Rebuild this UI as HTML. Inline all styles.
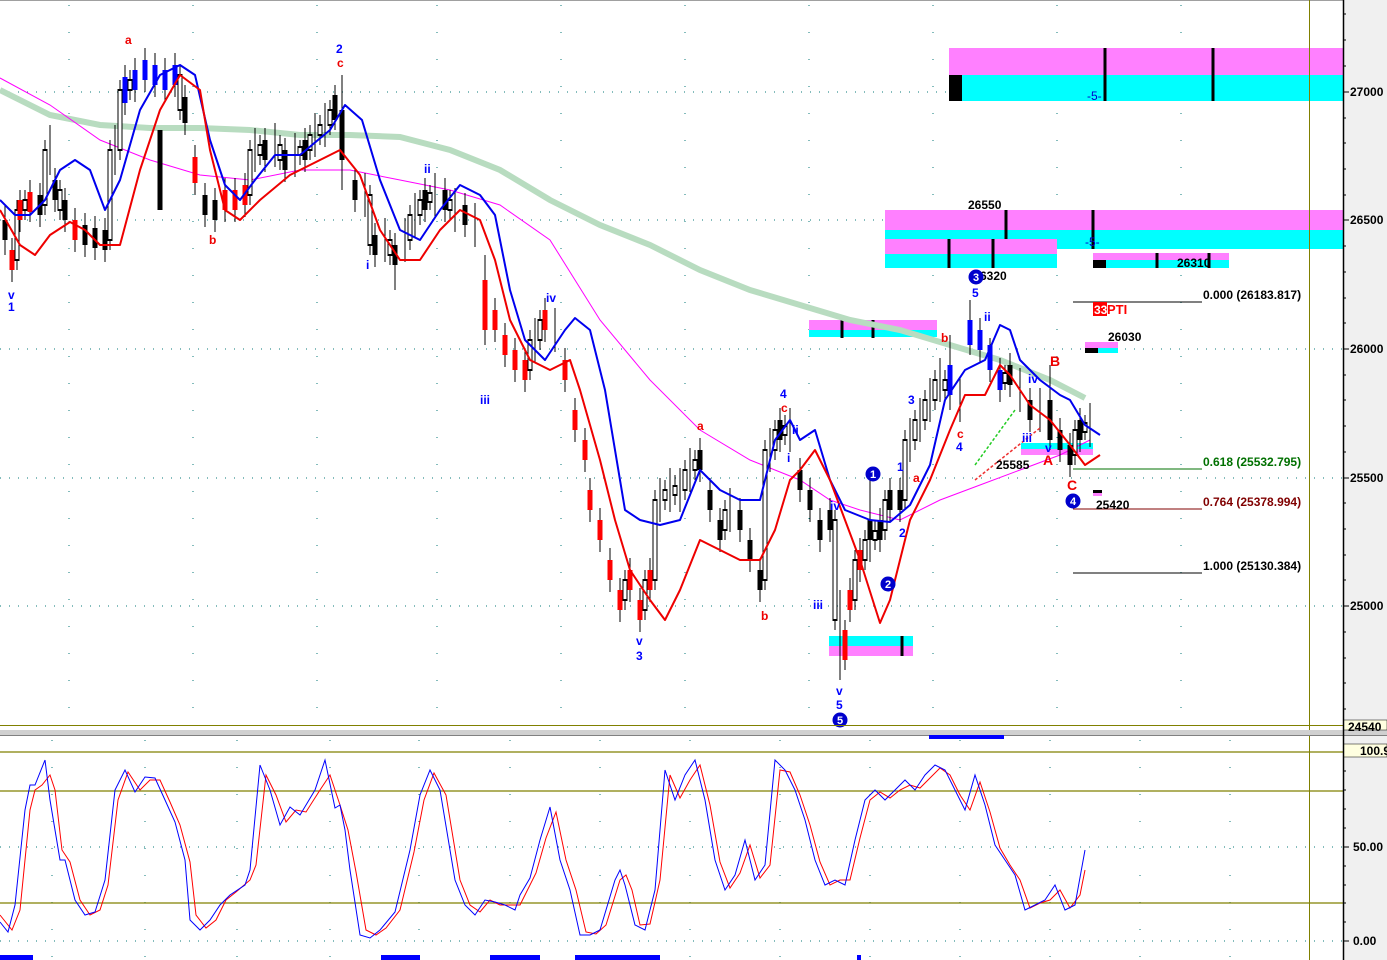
<!DOCTYPE html>
<html><head><meta charset="utf-8"><style>
html,body{margin:0;padding:0;background:#fff;}
svg{display:block;font-family:"Liberation Sans",sans-serif;font-weight:bold;}
</style></head><body>
<svg width="1387" height="960" viewBox="0 0 1387 960" xmlns="http://www.w3.org/2000/svg">
<rect width="1387" height="960" fill="#fff"/>
<rect x="1343" y="0" width="44" height="960" fill="#f0f0f0"/>
<line x1="0" y1="0.5" x2="1343" y2="0.5" stroke="#a0a0a0"/>
<g stroke="#0a7a7a" stroke-width="1" stroke-dasharray="1,8">
<line x1="0" y1="92" x2="1343" y2="92"/><line x1="0" y1="220" x2="1343" y2="220"/>
<line x1="0" y1="349" x2="1343" y2="349"/><line x1="0" y1="478" x2="1343" y2="478"/>
<line x1="0" y1="606" x2="1343" y2="606"/>
<line x1="0" y1="752" x2="1343" y2="752"/><line x1="0" y1="847" x2="1343" y2="847"/><line x1="0" y1="941" x2="1343" y2="941"/>
</g>
<g stroke="#0a7a7a" stroke-width="1" stroke-dasharray="1,26">
<line x1="69" y1="5" x2="69" y2="725"/><line x1="193" y1="5" x2="193" y2="725"/><line x1="317" y1="5" x2="317" y2="725"/><line x1="437" y1="5" x2="437" y2="725"/><line x1="561" y1="5" x2="561" y2="725"/><line x1="685" y1="5" x2="685" y2="725"/><line x1="809" y1="5" x2="809" y2="725"/><line x1="933" y1="5" x2="933" y2="725"/><line x1="1057" y1="5" x2="1057" y2="725"/><line x1="1181" y1="5" x2="1181" y2="725"/>
<line x1="52" y1="740" x2="52" y2="960"/><line x1="145" y1="740" x2="145" y2="960"/><line x1="237" y1="740" x2="237" y2="960"/><line x1="330" y1="740" x2="330" y2="960"/><line x1="419" y1="740" x2="419" y2="960"/><line x1="510" y1="740" x2="510" y2="960"/><line x1="600" y1="740" x2="600" y2="960"/><line x1="690" y1="740" x2="690" y2="960"/><line x1="780" y1="740" x2="780" y2="960"/><line x1="870" y1="740" x2="870" y2="960"/><line x1="960" y1="740" x2="960" y2="960"/><line x1="1050" y1="740" x2="1050" y2="960"/><line x1="1140" y1="740" x2="1140" y2="960"/><line x1="1230" y1="740" x2="1230" y2="960"/>
</g>
<rect x="949" y="48" width="394" height="27" fill="#ff80ff"/><rect x="949" y="75" width="394" height="26" fill="#00ffff"/>
<rect x="949" y="75" width="13" height="26" fill="#000"/>
<rect x="885" y="210" width="458" height="20" fill="#ff80ff"/><rect x="885" y="230" width="458" height="19" fill="#00ffff"/>
<rect x="885" y="239" width="172" height="15" fill="#ff80ff"/><rect x="885" y="254" width="172" height="14" fill="#00ffff"/>
<rect x="1093" y="253" width="136" height="7" fill="#ff80ff"/><rect x="1093" y="260" width="136" height="8" fill="#00ffff"/><rect x="1093" y="260" width="13" height="8" fill="#000"/>
<rect x="809" y="320" width="128" height="10" fill="#ff80ff"/><rect x="809" y="330" width="128" height="7" fill="#00ffff"/>
<rect x="1085" y="342" width="33" height="6" fill="#ff80ff"/><rect x="1085" y="348" width="33" height="5" fill="#00ffff"/><rect x="1085" y="348" width="13" height="5" fill="#000"/>
<rect x="1021" y="443" width="72" height="6" fill="#00ffff"/><rect x="1021" y="449" width="72" height="6" fill="#ff80ff"/>
<rect x="829" y="636" width="84" height="10" fill="#00ffff"/><rect x="829" y="646" width="84" height="10" fill="#ff80ff"/>
<rect x="1093" y="490" width="9" height="3" fill="#000"/><rect x="1093" y="493" width="9" height="3" fill="#ff80ff"/>
<g stroke="#000" stroke-width="3">
<line x1="1105" y1="48" x2="1105" y2="101"/><line x1="1213" y1="48" x2="1213" y2="101"/>
<line x1="1006" y1="210" x2="1006" y2="239"/><line x1="1093" y1="210" x2="1093" y2="249"/>
<line x1="949" y1="239" x2="949" y2="268"/><line x1="993" y1="239" x2="993" y2="268"/><line x1="1157" y1="253" x2="1157" y2="268"/><line x1="1209" y1="253" x2="1209" y2="268"/>
<line x1="842" y1="320" x2="842" y2="338"/><line x1="873" y1="320" x2="873" y2="338"/><line x1="902" y1="636" x2="902" y2="656"/>
</g>
<polyline fill="none" stroke="#b8dcc0" stroke-width="6" points="0,90 50,115 100,125 150,128 200,128 250,130 300,135 350,135 400,137 450,150 500,170 550,200 600,225 650,245 700,270 750,290 800,305 850,320 900,330 950,345 1000,360 1050,380 1085,398"/>
<polyline fill="none" stroke="#ff00ff" stroke-width="1" points="0,78 50,105 100,140 150,160 200,175 250,180 300,170 350,170 400,180 450,190 500,205 550,240 600,320 650,380 700,430 750,460 800,480 830,500 860,510 900,520 940,500 980,485 1020,470 1060,455 1090,440"/>
<g stroke="#000" stroke-width="1">
<path d="M5 205V255M12 238V282M20 190V232M30 180V222M40 183V227M50 125V175M55 168V212M65 188V232M75 208V252M85 213V257M95 216V260M105 218V262M115 125V175M125 65V115M135 58V102M145 48V92M155 53V97M165 58V102M175 53V97M185 85V135M195 145V195M205 183V227M215 188V232M225 178V222M235 178V222M245 173V217M255 128V172M265 128V172M275 123V167M285 138V182M295 133V177M305 128V172M315 113V157M325 103V147M335 85V130M342 75V190M355 168V212M365 173V217M375 223V267M385 218V262M395 233V290M405 218V262M415 193V237M425 178V222M435 173V217M445 178V222M455 188V232M465 193V237M475 203V247M485 255V345M495 298V342M505 323V367M515 338V382M525 348V392M535 318V362M545 298V342M555 308V352M565 348V392M575 398V442M585 428V472M590 478V522M600 508V552M610 548V592M620 578V622M630 558V602M640 588V632M650 558V602M660 478V522M670 468V512M680 468V512M690 448V492M700 438V482M710 478V522M720 508V552M730 488V532M740 498V542M750 528V572M760 558V602M770 428V472M780 408V452M790 408V452M800 458V502M810 478V522M820 508V552M830 498V542M840 590V680M845 620V670M850 578V622M860 538V582M870 468V562M880 508V552M890 478V522M900 478V522M910 418V462M920 398V442M930 378V422M940 358V402M950 335V410M960 378V422M970 300V355M980 318V362M990 338V382M1000 358V402M1010 353V397M1020 368V412M1030 388V432M1040 388V432M1050 365V450M1060 418V462M1070 433V477M1080 408V452M1090 403V447"/>
<path d="M17 200V270M25 190V220M45 140V215M60 180V220M110 140V250M120 80V160M130 70V100M180 65V120M250 140V205M260 135V165M280 135V170M300 140V165M310 125V160M320 115V145M330 100V135M370 185V255M390 230V265M410 205V250M420 190V225M430 185V210M450 190V220M530 330V380M540 310V350M625 570V610M645 570V620M655 490V590M665 480V510M675 475V505M685 460V500M695 450V480M725 500V540M765 440V590M775 420V460M785 415V445M835 510V630M855 550V610M865 530V570M875 520V550M885 490V540M905 430V510M915 410V450M925 390V430M935 370V410M945 370V400M1005 365V390M1075 420V465M1085 415V440"/>
</g>
<g stroke="#000" stroke-width="5">
<path d="M17 209V261M25 199V211M45 149V206M60 189V211M110 149V241M120 89V151M130 79V91M180 74V111M250 149V196M260 144V156M280 144V161M300 146V156M310 134V151M320 124V136M330 109V126M370 194V246M390 239V256M410 214V241M420 199V216M430 192V203M450 199V211M530 339V371M540 319V341M625 579V601M645 579V611M655 499V581M665 489V501M675 485V496M685 469V491M695 459V471M725 509V531M765 449V581M775 429V451M785 425V436M835 519V621M855 559V601M865 539V561M875 530V541M885 499V531M905 439V501M915 419V441M925 399V421M935 379V401M945 379V391M1005 372V384M1075 429V456M1085 422V433"/>
</g>
<g stroke="#fff" stroke-width="3">
<path d="M17 211V259M25 201V209M45 151V204M60 191V209M110 151V239M120 91V149M130 81V89M180 76V109M250 151V194M260 146V154M280 146V159M300 148V154M310 136V149M320 126V134M330 111V124M370 196V244M390 241V254M410 216V239M420 201V214M430 194V201M450 201V209M530 341V369M540 321V339M625 581V599M645 581V609M655 501V579M665 491V499M675 487V494M685 471V489M695 461V469M725 511V529M765 451V579M775 431V449M785 427V434M835 521V619M855 561V599M865 541V559M875 532V539M885 501V529M905 441V499M915 421V439M925 401V419M935 381V399M945 381V389M1005 374V382M1075 431V454M1085 424V431"/>
</g>
<g stroke="#000" stroke-width="5">
<path d="M5 220V240M40 195V215M55 180V200M65 200V220M85 225V245M95 228V248M105 230V250M160 130V210M185 97V123M205 195V215M215 200V220M265 140V160M285 150V170M305 140V160M335 95V120M342 110V160M355 180V200M375 235V255M395 245V265M425 190V210M445 190V210M465 205V225M700 450V470M710 490V510M720 520V540M740 510V530M750 540V560M760 570V590M780 420V440M800 470V490M810 490V510M820 520V540M830 510V530M870 520V540M880 520V540M890 490V510M900 490V510M1010 365V385M1030 400V420M1050 400V440M1060 430V450M1070 445V465M1080 420V440"/>
</g>
<g stroke="#ff0000" stroke-width="5">
<path d="M12 250V270M20 200V220M30 192V212M75 220V240M195 157V183M225 190V210M235 190V210M245 185V205M485 280V330M495 310V330M505 335V355M515 350V370M525 360V380M545 310V330M565 360V380M575 410V430M585 440V460M590 490V510M600 520V540M610 560V580M620 590V610M630 570V590M640 600V620M650 570V590M845 630V660M850 590V610M860 550V570"/>
</g>
<g stroke="#0000ff" stroke-width="5">
<path d="M125 77V103M135 70V90M145 60V80M155 65V85M165 70V90M175 65V85M950 365V395M970 320V345M980 330V350M990 345V370M1000 370V390"/>
</g>
<polyline fill="none" stroke="#0000ee" stroke-width="2" stroke-linejoin="round" points="0,200 15,215 30,215 45,200 60,170 75,160 90,170 105,210 120,180 140,110 160,75 180,65 195,75 210,140 225,185 240,200 255,180 275,155 300,155 330,130 345,105 362,120 380,180 400,230 420,240 440,210 460,185 480,195 495,215 510,290 525,340 545,360 565,330 575,318 590,330 605,390 625,510 640,520 660,525 680,520 700,470 720,490 740,500 760,500 775,440 790,420 800,440 815,430 830,480 845,510 870,520 890,522 910,505 930,465 945,400 965,370 985,360 1000,325 1010,330 1020,360 1040,380 1060,395 1070,400 1085,425 1100,435"/>
<polyline fill="none" stroke="#ee0000" stroke-width="2" stroke-linejoin="round" points="0,210 20,245 35,255 50,235 70,222 85,230 100,245 120,245 140,170 160,110 180,75 200,90 210,150 225,210 240,220 260,200 290,175 320,160 340,150 360,175 380,230 400,260 420,260 440,230 460,210 480,220 495,260 510,320 530,360 550,370 570,360 580,390 600,460 615,520 630,570 650,600 665,620 680,590 700,540 720,550 740,560 760,560 775,530 790,480 800,470 815,450 830,480 845,520 860,560 880,623 890,600 910,520 930,480 950,430 965,395 985,395 1000,365 1010,375 1030,405 1050,420 1070,445 1085,465 1100,455"/>
<polyline fill="none" stroke="#22cc22" stroke-width="1.5" stroke-dasharray="3,2" points="975,465 1015,410"/>
<polyline fill="none" stroke="#ee3333" stroke-width="1.5" stroke-dasharray="3,2" points="975,480 1040,428"/>
<line x1="1073" y1="302" x2="1202" y2="302" stroke="#000"/>
<line x1="1073" y1="469" x2="1202" y2="469" stroke="#007000"/>
<line x1="1073" y1="509" x2="1202" y2="509" stroke="#800000"/>
<line x1="1073" y1="573" x2="1202" y2="573" stroke="#000"/>
<g font-size="12">
<text x="1203" y="299" fill="#000">0.000 (26183.817)</text>
<text x="1203" y="466" fill="#007000">0.618 (25532.795)</text>
<text x="1203" y="506" fill="#800000">0.764 (25378.994)</text>
<text x="1203" y="570" fill="#000">1.000 (25130.384)</text>
<text x="968" y="209" fill="#000">26550</text>
<text x="1177" y="267" fill="#000">26310</text>
<text x="1108" y="341" fill="#000">26030</text>
<text x="996" y="469" fill="#000">25585</text>
<text x="1096" y="509" fill="#000">25420</text>
<text x="980" y="280" fill="#000">6320</text>
<text x="1087" y="100" fill="#0000cc" font-weight="normal">-5-</text>
<text x="1085" y="246" fill="#0000cc" font-weight="normal">-5-</text>
</g>
<rect x="1093" y="302" width="14" height="14" fill="#ff0000"/>
<text x="1094" y="314" font-size="12" fill="#fff">33</text>
<text x="1107" y="314" font-size="13" fill="#ff0000">PTI</text>
<g font-size="12" fill="#0000ff">
<text x="8" y="299">v</text><text x="8" y="311">1</text>
<text x="336" y="53">2</text>
<text x="424" y="173">ii</text>
<text x="366" y="269">i</text>
<text x="480" y="404">iii</text>
<text x="546" y="302">iv</text>
<text x="636" y="645">v</text><text x="636" y="660">3</text>
<text x="780" y="398">4</text>
<text x="792" y="434">ii</text><text x="787" y="462">i</text>
<text x="813" y="609">iii</text>
<text x="830" y="510">iv</text>
<text x="836" y="695">v</text><text x="836" y="709">5</text>
<text x="897" y="471">1</text><text x="899" y="537">2</text><text x="908" y="404">3</text>
<text x="956" y="451">4</text>
<text x="972" y="297">5</text><text x="984" y="321">ii</text>
<text x="1028" y="383">iv</text><text x="1022" y="442">iii</text><text x="1045" y="452">v</text>
</g>
<g font-size="12" fill="#ee0000">
<text x="125" y="44">a</text><text x="337" y="67">c</text><text x="209" y="244">b</text>
<text x="697" y="430">a</text><text x="781" y="412">c</text><text x="761" y="620">b</text>
<text x="913" y="482">a</text><text x="941" y="342">b</text><text x="957" y="438">c</text>
<text x="1050" y="366" font-size="14">B</text><text x="1043" y="465" font-size="14">A</text><text x="1067" y="490" font-size="14">C</text>
</g>
<g fill="#0000cc"><circle cx="873" cy="474" r="7.5"/><circle cx="888" cy="584" r="7.5"/><circle cx="976" cy="277" r="7.5"/><circle cx="1073" cy="501" r="7.5"/><circle cx="840" cy="720" r="7.5"/></g>
<g font-size="11" fill="#fff" text-anchor="middle"><text x="873" y="478">1</text><text x="888" y="588">2</text><text x="976" y="281">3</text><text x="1073" y="505">4</text><text x="840" y="724">5</text></g>
<line x1="1309.5" y1="0" x2="1309.5" y2="960" stroke="#808000"/>
<line x1="0" y1="725.5" x2="1343" y2="725.5" stroke="#808000"/>
<rect x="0" y="730" width="1387" height="5" fill="#d0d0d0"/>
<line x1="0" y1="735.5" x2="1387" y2="735.5" stroke="#808080"/>
<rect x="929" y="735" width="75" height="4" fill="#0000ff"/>
<g stroke="#808000" stroke-width="1.3"><line x1="0" y1="752" x2="1343" y2="752"/><line x1="0" y1="791" x2="1343" y2="791"/><line x1="0" y1="903" x2="1343" y2="903"/></g>
<polyline fill="none" stroke="#ff0000" stroke-width="1" points="0,915 12,930 20,910 30,810 35,790 42,785 50,775 55,790 62,850 70,862 80,900 90,915 100,910 108,885 118,800 128,772 140,790 150,780 160,780 170,802 180,825 190,862 196,915 206,928 216,920 226,900 236,892 250,880 256,865 266,775 276,795 286,822 296,810 306,812 320,790 330,775 340,805 348,830 356,872 366,930 376,935 386,928 400,910 414,852 424,800 434,773 446,795 460,880 470,905 480,912 490,900 500,905 510,905 520,905 526,893 536,873 546,838 556,812 566,860 576,890 586,932 596,934 606,925 620,880 626,875 632,890 640,925 650,924 660,880 670,775 680,798 690,780 700,765 710,805 720,862 730,888 740,873 750,845 760,878 770,865 780,770 790,772 800,795 810,825 820,862 830,885 840,880 850,880 860,838 870,800 880,792 890,798 900,790 910,785 920,788 930,778 940,768 950,775 960,795 970,810 980,782 990,812 1000,848 1010,865 1020,880 1030,908 1040,903 1050,900 1060,890 1070,908 1080,895 1085,870"/>
<polyline fill="none" stroke="#0000ff" stroke-width="1" points="0,922 8,932 15,905 25,810 30,785 35,785 45,760 50,800 60,860 65,860 75,900 85,915 95,912 105,880 115,790 125,770 135,792 145,777 155,778 165,800 175,822 185,860 190,920 200,930 210,920 220,905 230,895 245,885 250,870 260,765 270,790 280,825 290,807 300,815 315,790 325,760 335,808 340,805 345,830 350,870 360,935 370,938 380,930 395,912 410,850 420,795 430,770 440,790 455,880 465,905 475,915 485,900 495,902 505,905 515,910 520,895 530,878 540,840 550,807 560,860 570,890 580,935 590,935 600,930 615,880 620,870 625,885 635,925 645,930 655,890 665,770 675,800 685,775 695,760 705,800 715,860 725,890 735,875 745,840 755,880 765,865 775,760 785,770 795,790 805,820 815,860 825,885 835,880 845,885 855,840 865,800 875,790 885,800 895,790 905,780 915,790 925,775 935,765 945,770 955,790 965,810 975,775 985,805 995,845 1005,860 1015,875 1025,910 1035,905 1045,900 1055,885 1065,910 1075,905 1085,850"/>
<g fill="#0000ff"><rect x="0" y="955" width="33" height="5"/><rect x="381" y="955" width="39" height="5"/><rect x="490" y="955" width="50" height="5"/><rect x="575" y="955" width="85" height="5"/><rect x="857" y="955" width="4" height="5"/></g>
<line x1="1343.5" y1="0" x2="1343.5" y2="960" stroke="#000" stroke-width="1.5"/>
<g stroke="#000"><path d="M1343 14h3M1343 40h3M1343 66h3M1343 118h3M1343 143h3M1343 169h3M1343 195h3M1343 246h3M1343 272h3M1343 298h3M1343 323h3M1343 375h3M1343 400h3M1343 426h3M1343 452h3M1343 503h3M1343 529h3M1343 555h3M1343 580h3M1343 632h3M1343 658h3M1343 683h3M1343 709h3M1343 92h6M1343 220h6M1343 349h6M1343 478h6M1343 606h6M1343 771h3M1343 790h3M1343 809h3M1343 828h3M1343 866h3M1343 885h3M1343 903h3M1343 922h3M1343 847h6M1343 941h6"/></g>
<g font-size="12" fill="#000" font-weight="bold">
<text x="1350" y="96">27000</text><text x="1350" y="224">26500</text><text x="1350" y="353">26000</text><text x="1350" y="482">25500</text><text x="1350" y="610">25000</text>
<text x="1353" y="851">50.00</text><text x="1353" y="945">0.00</text>
</g>
<rect x="1344" y="720" width="43" height="10" fill="#ffffe0" stroke="#000" stroke-width="0.5"/>
<text x="1348" y="731" font-size="12" font-weight="bold">24540</text>
<rect x="1344" y="744" width="43" height="13" fill="#ffffe0" stroke="#000" stroke-width="0.5"/>
<text x="1360" y="755" font-size="12" font-weight="bold">100.9</text>
</svg>
</body></html>
